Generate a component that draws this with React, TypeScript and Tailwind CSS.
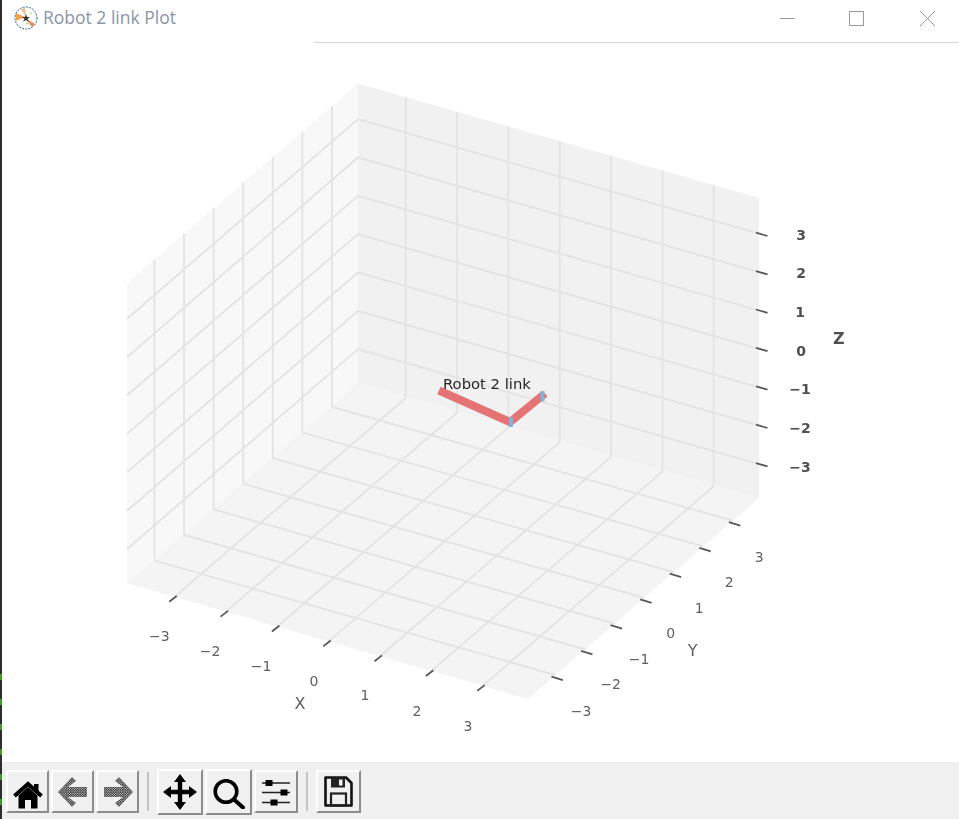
import React from "react";

const F = [0, 1, 2, 3, 4, 5, 6].map((i) => 0.119 + 0.128 * i);
type P = [number, number];
const lerp = (a: P, b: P, t: number): P => [a[0] + (b[0] - a[0]) * t, a[1] + (b[1] - a[1]) * t];

const TOP: P = [358, 83.5];
const LEFT_T: P = [127, 283];
const LEFT_B: P = [127, 583];
const IN: P = [358, 383];
const RIGHT_T: P = [759, 198];
const RIGHT_B: P = [759, 498];
const FRONT: P = [528, 699];
const pts = (a: P[]) => a.map((p) => p.join(",")).join(" ");

function Seg({ a, b, c = "#e3e3e3", w = 1.8 }: { a: P; b: P; c?: string; w?: number }) {
  return <line x1={a[0]} y1={a[1]} x2={b[0]} y2={b[1]} stroke={c} strokeWidth={w} />;
}

function Label({ x, y, t, bold, size = 14 }: { x: number; y: number; t: string; bold?: boolean; size?: number }) {
  return (
    <text
      x={x}
      y={y + size * 0.36}
      textAnchor="middle"
      fontSize={size}
      className={bold ? "fill-[#505050] font-['DejaVu_Sans'] font-bold" : "fill-[#606060] font-['DejaVu_Sans']"}
    >
      {t}
    </text>
  );
}

const xLabels: [number, number, string][] = [
  [159.3, 636, "−3"],
  [210, 651, "−2"],
  [261, 666, "−1"],
  [314, 681, "0"],
  [365, 695, "1"],
  [417, 711, "2"],
  [468, 726, "3"],
];
const yLabels: [number, number, string][] = [
  [581, 711, "−3"],
  [610.7, 684, "−2"],
  [639, 659, "−1"],
  [670.7, 633, "0"],
  [699.3, 607.7, "1"],
  [729.3, 582, "2"],
  [759.3, 556.7, "3"],
];
const zLabels: [number, number, string][] = [
  [801, 235.3, "3"],
  [801, 273, "2"],
  [800, 312, "1"],
  [801, 351, "0"],
  [800, 389, "−1"],
  [800, 428, "−2"],
  [800, 467, "−3"],
];

function Plot() {
  return (
    <svg viewBox="2 43 957 719" className="block w-[957px] h-[719px] blur-[0.6px]">
      <polygon points={pts([TOP, IN, LEFT_B, LEFT_T])} fill="#f8f8f8" />
      <polygon points={pts([TOP, RIGHT_T, RIGHT_B, IN])} fill="#f1f1f1" />
      <polygon points={pts([IN, RIGHT_B, FRONT, LEFT_B])} fill="#f4f4f4" />
      {F.map((f, i) => {
        const l0 = lerp(LEFT_T, TOP, f);
        const l1 = lerp(LEFT_B, IN, f);
        const r0 = lerp(TOP, RIGHT_T, f);
        const r1 = lerp(IN, RIGHT_B, f);
        const zl = lerp(TOP, IN, f);
        const zll = lerp(LEFT_T, LEFT_B, f);
        const zr = lerp(RIGHT_T, RIGHT_B, f);
        const fx = lerp(LEFT_B, FRONT, f);
        const fy = lerp(FRONT, RIGHT_B, f);
        return (
          <g key={i}>
            <Seg a={l0} b={[l1[0], l1[1] + 1.3]} />
            <Seg a={r0} b={[r1[0], r1[1] + 1.3]} />
            <Seg a={zll} b={zl} />
            <Seg a={zl} b={zr} />
            <Seg a={[l1[0], l1[1] + 1.3]} b={fy} />
            <Seg a={[r1[0], r1[1] + 1.3]} b={fx} />
            <Seg a={[fx[0] + 2, fx[1] - 0.8]} b={[fx[0] - 5.5, fx[1] + 5]} c="#585858" w={1.8} />
            <Seg a={[fy[0] - 4, fy[1] + 1.5]} b={[fy[0] + 7.4, fy[1] + 5]} c="#585858" w={1.8} />
            <Seg a={[756, zr[1] - 1]} b={[767.5, zr[1] + 2.3]} c="#585858" w={1.8} />
          </g>
        );
      })}
      <polyline points="439,390.5 510,422 545,393.5" fill="none" stroke="#e57373" strokeWidth={8} />
      <rect x={509} y={417} width={4} height={10} fill="#7fb2de" />
      <rect x={540.5} y={391.5} width={4} height={10} fill="#7fb2de" />
      <text x={443} y={389} fontSize={14.8} className="fill-[#262626] font-['DejaVu_Sans']">
        Robot 2 link
      </text>
      {xLabels.map(([x, y, t]) => (
        <Label key={"x" + t} x={x} y={y} t={t} />
      ))}
      {yLabels.map(([x, y, t]) => (
        <Label key={"y" + t} x={x} y={y} t={t} />
      ))}
      {zLabels.map(([x, y, t]) => (
        <Label key={"z" + t} x={x} y={y} t={t} bold />
      ))}
      <Label x={300} y={703} t="X" size={16} />
      <Label x={692.7} y={650} t="Y" size={16} />
      <Label x={838.7} y={338} t="Z" size={16} bold />
    </svg>
  );
}

function AppIcon() {
  return (
    <svg viewBox="0 0 24 24" className="w-[24px] h-[24px]">
      <circle cx={12} cy={12} r={11} fill="#fff" stroke="#2f6f97" strokeWidth={1} strokeDasharray="2.2 1" />
      <polygon points="11,11 2,7 2,15" fill="#f3a24c" />
      <polygon points="11,12 18,21 21,18" fill="#ee8a50" />
      <polygon points="7,3 12,11 11,2" fill="#f6b98a" />
      <polygon points="15,7 18,6 17,9" fill="#d8d860" />
      <polygon points="12,17 14,17 13,19" fill="#7cc06a" />
      <polygon points="12,8 13,11 16,11 13.5,13 15,16 12,14 9,16 10.5,13 8,11 11,11" fill="#333" />
    </svg>
  );
}

function Btn({ w, h = "h-[43px]", children }: { w: string; h?: string; children: React.ReactNode }) {
  return (
    <div
      className={`${w} ${h} flex items-center justify-center bg-[#f0f0f0] border-2 border-t-white border-l-white border-r-[#8c8c8c] border-b-[#8c8c8c]`}
    >
      {children}
    </div>
  );
}

function Home() {
  return (
    <svg viewBox="0 0 30 28" className="w-[30px] h-[28px] mt-[7px] blur-[0.5px]">
      <rect x={21} y={3} width={4.5} height={8} fill="#000" />
      <polyline points="1.5,15 15,3 28.5,15" fill="none" stroke="#000" strokeWidth={4} />
      <path d="M5.5 14.5 L15 6 L24.5 14.5 V27.5 H18 V19 H12 V27.5 H5.5 Z" fill="#000" />
    </svg>
  );
}

function Stipple({ id }: { id: string }) {
  return (
    <defs>
      <pattern id={id} width={2.4} height={2.4} patternUnits="userSpaceOnUse">
        <rect width={1.4} height={1.4} fill="#111" />
        <rect x={1.2} y={1.2} width={1.2} height={1.2} fill="#111" />
      </pattern>
    </defs>
  );
}

function ArrowLeft() {
  return (
    <svg viewBox="0 0 30 30" className="w-[30px] h-[30px] blur-[0.5px]">
      <Stipple id="stl" />
      <path d="M14 0 L0 15 L14 30 L18 26 L10 20 H29 V10 H10 L18 4 Z" fill="url(#stl)" />
    </svg>
  );
}

function ArrowRight() {
  return (
    <svg viewBox="0 0 30 30" className="w-[30px] h-[30px] blur-[0.5px]">
      <Stipple id="str" />
      <path d="M16 0 L30 15 L16 30 L12 26 L20 20 H1 V10 H20 L12 4 Z" fill="url(#str)" />
    </svg>
  );
}

function Move() {
  return (
    <svg viewBox="0 0 34 36" className="w-[34px] h-[36px] blur-[0.5px]">
      <path d="M17 5 V31 M5 18 H29" stroke="#000" strokeWidth={4.4} fill="none" />
      <polygon points="17,0 23,8 11,8" fill="#000" />
      <polygon points="17,36 23,28 11,28" fill="#000" />
      <polygon points="0,18 8,12 8,24" fill="#000" />
      <polygon points="34,18 26,12 26,24" fill="#000" />
    </svg>
  );
}

function Search() {
  return (
    <svg viewBox="0 0 32 30" className="w-[32px] h-[30px] mt-[4px] blur-[0.5px]">
      <circle cx={13} cy={12.5} r={10.8} fill="none" stroke="#000" strokeWidth={3.6} />
      <path d="M21 20.5 L30 28.5" stroke="#000" strokeWidth={4} strokeLinecap="round" />
    </svg>
  );
}

function Config() {
  return (
    <svg viewBox="0 0 28 28" className="w-[28px] h-[28px] mt-[3px] blur-[0.5px]">
      <path d="M0 4 H28 M0 13.5 H28 M0 23.5 H28" stroke="#222" strokeWidth={1.6} />
      <rect x={3.5} y={1} width={7} height={6} fill="#000" />
      <rect x={18.5} y={10.5} width={7} height={6} fill="#000" />
      <rect x={8.5} y={20.5} width={7} height={6} fill="#000" />
    </svg>
  );
}

function Save() {
  return (
    <svg viewBox="0 0 29 31" className="w-[29px] h-[31px] blur-[0.5px]">
      <path d="M1.5 1.5 H22 L27.5 7 V29.5 H1.5 Z" fill="none" stroke="#111" strokeWidth={2.6} strokeLinejoin="round" />
      <path d="M7 1.5 H21 V11.5 H7 Z" fill="#222" />
      <rect x={15} y={3.5} width={3.5} height={6} fill="#f0f0f0" />
      <rect x={7} y={17.5} width={15} height={12} fill="none" stroke="#222" strokeWidth={2.2} />
    </svg>
  );
}

export default function App() {
  return (
    <div className="flex w-[959px] h-[819px] bg-white overflow-hidden">
      <div className="w-[2px] shrink-0 bg-[#2e2e2e] flex flex-col gap-[19px] pt-[674px]">
        {[0, 1, 2, 3, 4, 5].map((i) => (
          <div key={i} className="h-[6px] bg-[#3f9a2a]" />
        ))}
      </div>
      <div className="flex-1 flex flex-col min-w-0">
        <div className="h-[42px] flex items-start">
          <div className="flex items-center h-[36px] pl-[12px] gap-[5px]">
            <AppIcon />
            <span className="text-[17.5px] font-['Open_Sans'] text-[#8b94a6] leading-none">Robot 2 link Plot</span>
          </div>
          <div className="ml-auto flex items-center h-[36px] pr-[24px]">
            <div className="w-[15px] h-px bg-[#999]" />
            <div className="ml-[54px] w-[15px] h-[15px] border border-[#999]" />
            <svg viewBox="0 0 15 15" className="ml-[56px] w-[15px] h-[15px]">
              <path d="M0 0 L15 15 M15 0 L0 15" stroke="#999" strokeWidth={1} />
            </svg>
          </div>
        </div>
        <div className="h-px ml-[312px] bg-[#d6d6d6]" />
        <Plot />
        <div className="h-[57px] bg-[#f0f0f0] flex items-center pl-[4px] pt-[2px]">
          <div className="flex gap-[2px]">
            <Btn w="w-[43px]"><Home /></Btn>
            <Btn w="w-[43px]"><ArrowLeft /></Btn>
            <Btn w="w-[43px]"><ArrowRight /></Btn>
          </div>
          <div className="mx-[8px] w-[2px] h-[39px] bg-[#c4c4c4]" />
          <div className="flex items-center gap-[2px]">
            <Btn w="w-[46px]" h="h-[46px]"><Move /></Btn>
            <Btn w="w-[47px]" h="h-[46px]"><Search /></Btn>
            <Btn w="w-[44px]"><Config /></Btn>
          </div>
          <div className="mx-[8px] w-[2px] h-[39px] bg-[#c4c4c4]" />
          <Btn w="w-[45px]"><Save /></Btn>
        </div>
      </div>
    </div>
  );
}
